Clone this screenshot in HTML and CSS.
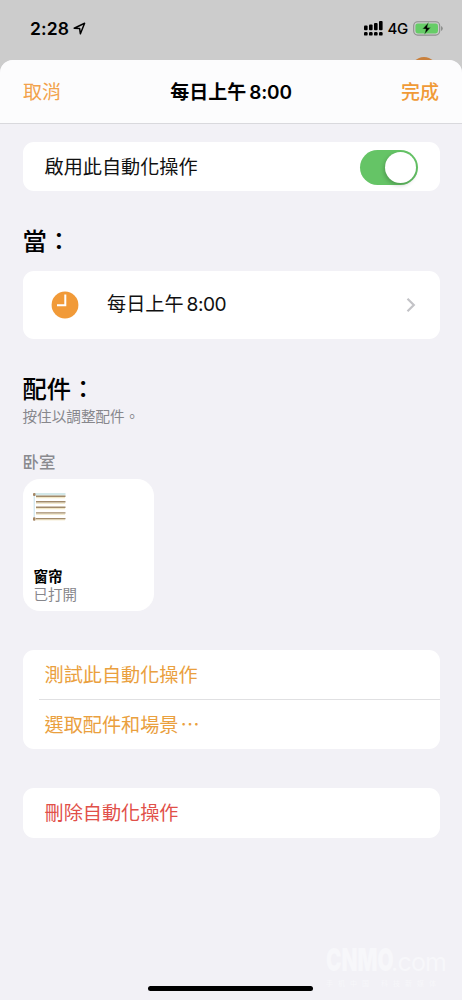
FILE: index.html
```html
<!DOCTYPE html>
<html lang="zh-Hant">
<head>
<meta charset="utf-8">
<title>每日上午 8:00</title>
<link rel="stylesheet" href="styles.css">
</head>
<body>
<div class="screen">
  <div class="status">
    <div class="status-left">
      <span class="time">2:28</span>
      <svg class="loc" width="13" height="13" viewBox="0 0 13 13"><path d="M1.2 6.2 11.6 1.2 7.4 11.8 6.6 6.4Z" fill="none" stroke="#000" stroke-width="1.5" stroke-linejoin="round"/></svg>
    </div>
    <div class="status-right">
      <svg width="19" height="15" viewBox="0 0 19 15"><g fill="#000"><rect x="0" y="4.5" width="3.6" height="4.7" rx="1"/><rect x="5" y="3.5" width="3.6" height="5.7" rx="1"/><rect x="10" y="2" width="3.6" height="7.2" rx="1"/><rect x="15" y="0" width="3.6" height="9.2" rx="1"/><rect x="0" y="11" width="3.6" height="3.6" rx="1.2"/><rect x="5" y="11" width="3.6" height="3.6" rx="1.2"/><rect x="10" y="11" width="3.6" height="3.6" rx="1.2"/><rect x="15" y="11" width="3.6" height="3.6" rx="1.2"/></g></svg>
      <span class="net">4G</span>
      <svg width="30" height="15" viewBox="0 0 30 15"><rect x=".7" y=".7" width="26" height="13.4" rx="4" fill="none" stroke="#8d8f8d" stroke-width="1.1"/><rect x="2.4" y="2.4" width="22.6" height="10" rx="2.4" fill="#66cd67"/><path d="M28 5v5q1.8-.8 1.8-2.5T28 5" fill="#8d8f8d"/><path d="M15.4 1.6 9.5 8.1h3.3l-1.3 5.2 6.2-6.7h-3.4z" fill="#000" stroke="#66cd67" stroke-width=".5"/></svg>
    </div>
  </div>
  <div class="behind"></div>
  <div class="sheet">
    <header class="nav">
      <span class="cancel">取消</span>
      <span class="title">每日上午<span class="num">8:00</span></span>
      <span class="done">完成</span>
    </header>
    <main class="content">
      <section class="card row enable"><span>啟用此自動化操作</span><span class="switch"><i class="knob"></i></span></section>
      <h2 class="heading when">當：</h2>
      <section class="card row trigger">
        <svg class="clock" width="28" height="28" viewBox="0 0 28 28"><circle cx="14" cy="14" r="13.4" fill="#f19a38"/><path d="M14.3 3.5V14.3H6" fill="none" stroke="#fff" stroke-width="2"/></svg>
        <span class="trigger-text">每日上午<span class="num">8:00</span></span>
        <svg class="chev" width="10" height="16" viewBox="0 0 10 16"><path d="M1.5 1.8 7.8 8 1.5 14.2" fill="none" stroke="#c3c3c7" stroke-width="2.2"/></svg>
      </section>
      <h2 class="heading acc">配件：</h2>
      <p class="hint">按住以調整配件。</p>
      <h3 class="room">卧室</h3>
      <section class="tile">
        <svg class="blind" width="33" height="30" viewBox="0 0 33 30"><rect x="2" y="1" width="30.5" height="2.6" fill="#d3e8e9"/><path d="M1.2 3v23" stroke="#c4e0ec" stroke-width="1"/><g stroke="#eee2ba" stroke-width="1"><path d="M3 5.7h29M3 11.2h29M3 16.7h29M3 22.2h29M3 27.8h29"/></g><g stroke="#a28b6b" stroke-width="1.4"><path d="M3 4.3h29.5M3 9.8h29.5M3 15.3h29.5M3 20.9h29.5M3 26.6h29.5"/></g><g fill="#a58664"><rect y="1" width="2.5" height="3" rx="1"/><rect y="25.3" width="2.5" height="3.5" rx="1"/></g></svg>
        <span class="tile-name">窗帘</span>
        <span class="tile-state">已打開</span>
      </section>
      <section class="card actions">
        <div class="row action">測試此自動化操作</div>
        <div class="divider"></div>
        <div class="row action">選取配件和場景<span class="dots">⋯</span></div>
      </section>
      <section class="card row delete">刪除自動化操作</section>
    </main>
  </div>
  <div class="home"></div>
  <div class="mark"><div class="logo"><b>CNMO</b><span>.com</span></div><div class="sub">手机中国 科技新媒体</div></div>
</div>
</body>
</html>
```
FILE: styles.css
```css
* { box-sizing: border-box; }
body { margin: 0; font-family: Inter, "Noto Sans CJK TC", sans-serif; color: #111; }
.screen { position: relative; width: 462px; height: 1000px; background: #ccc; overflow: hidden; display: flex; flex-direction: column; }
.status { height: 60px; flex: none; display: flex; justify-content: space-between; align-items: flex-start; padding: 17px 19px 0 30px; color: #000; }
.status-left, .status-right { display: flex; align-items: center; height: 22px; }
.time { font-size: 17.5px; font-weight: 600; letter-spacing: .1px; }
.loc { margin-left: 4px; }
.net { font-size: 15px; font-weight: 500; letter-spacing: -.3px; margin: 0 5px 0 5px; }
.behind { position: absolute; left: 411px; top: 57px; width: 26px; height: 26px; border-radius: 50%; background: #c9803c; }
.sheet { position: relative; flex: 1; background: #f2f1f6; border-radius: 13px 13px 0 0; overflow: hidden; }
.nav { height: 64px; background: #fcfcfd; border-bottom: 1.5px solid #d9d9dd; display: grid; grid-template-columns: 1fr auto 1fr; align-items: center; padding: 3px 23px 0; font-size: 19px; line-height: 28px; }
.cancel { color: #f2a24b; }
.title { color: #000; font-weight: 600; }
.title .num { letter-spacing: -.2px; }
.num { display: inline-block; margin-left: 3px; letter-spacing: -.5px; }
.done { color: #f09a37; font-weight: 500; text-align: right; }
.content { padding: 18px 22px 0 22.5px; }
.card { background: #fff; border-radius: 11px; }
.row { display: flex; align-items: center; padding: 0 22px; font-size: 19.15px; line-height: 28px; }
.enable { height: 49px; justify-content: space-between; padding-top: 1px; }
.switch { width: 58px; height: 35px; border-radius: 18px; background: #65c466; padding: 2px; display: flex; justify-content: flex-end; }
.knob { width: 31px; height: 31px; border-radius: 50%; background: #fff; box-shadow: -1px 2px 4px rgba(0,0,0,.22); }
.heading { margin: 0; font-size: 24.3px; line-height: 34px; font-weight: 500; color: #000; }
.when { margin: 33px 0 13px; }
.trigger { height: 68px; }
.clock { margin-left: 6.5px; }
.trigger-text { margin-left: 28px; flex: 1; margin-top: -3px; }
.chev { margin-right: 2px; }
.acc { margin-top: 33px; }
.hint { margin: 1px 0 0; font-size: 14.6px; line-height: 20px; color: #87878c; }
.room { margin: 24px 0 6px; font-size: 16.4px; line-height: 22px; font-weight: 500; color: #8a8a8f; }
.tile { width: 131.5px; height: 131.5px; background: #fff; border-radius: 17px; padding: 13px 11px 0; display: flex; flex-direction: column; }
.blind { flex: none; margin-left: -1px; }
.tile-name { margin-top: 45.5px; font-size: 14.5px; line-height: 18px; font-weight: 600; color: #000; }
.tile-state { font-size: 14.5px; line-height: 18px; color: #87878c; }
.actions { margin-top: 39px; color: #eaa03e; }
.action { height: 49px; padding-top: 1px; }
.divider { height: 1px; margin-left: 16px; background: #e0e0e2; }
.dots { margin-left: 2px; }
.delete { height: 50px; margin-top: 39px; padding-top: 1px; color: #e15049; }
.home { position: absolute; left: 148px; top: 985.5px; width: 165px; height: 5.5px; border-radius: 3px; background: #000; }
.mark { position: absolute; left: 326px; top: 943px; width: 122px; color: #f7f7fa; }
.logo { display: flex; align-items: baseline; line-height: 34px; }
.logo b { font-size: 32px; font-weight: 900; display: block; transform: scaleX(.65); transform-origin: 0 50%; width: 65px; }
.logo span { font-size: 25px; letter-spacing: -.8px; }
.sub { font-size: 7px; line-height: 8px; margin-top: 1px; letter-spacing: 5px; white-space: nowrap; }
```
